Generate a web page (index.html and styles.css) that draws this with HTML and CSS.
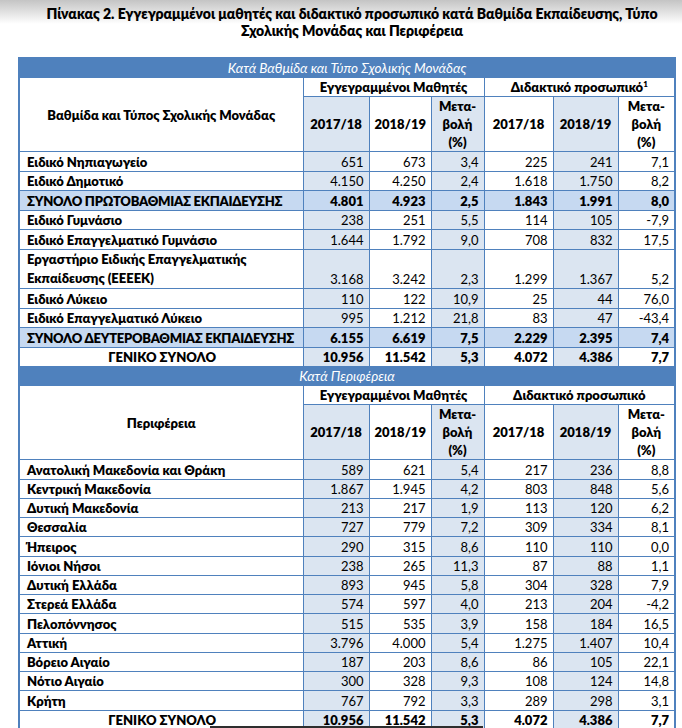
FILE: index.html
```html
<!DOCTYPE html>
<html lang="el">
<head>
<meta charset="utf-8">
<title>Πίνακας 2</title>
<link rel="stylesheet" href="styles.css">
</head>
<body>
<div class="page">
  <h1 class="title">Πίνακας 2. Εγγεγραμμένοι μαθητές και διδακτικό προσωπικό κατά Βαθμίδα Εκπαίδευσης, Τύπο<br>Σχολικής Μονάδας και Περιφέρεια</h1>
  <table class="stats">
    <colgroup>
      <col class="c-label"><col class="c-a"><col class="c-b"><col class="c-c"><col class="c-d"><col class="c-e"><col class="c-f">
    </colgroup>
    <tbody class="sec1">
      <tr class="band"><td colspan="7">Κατά Βαθμίδα και Τύπο Σχολικής Μονάδας</td></tr>
      <tr class="head1">
        <td class="lbl-head" rowspan="2">Βαθμίδα και Τύπος Σχολικής Μονάδας</td>
        <td colspan="3">Εγγεγραμμένοι Μαθητές</td>
        <td colspan="3">Διδακτικό προσωπικό<sup>1</sup></td>
      </tr>
      <tr class="head2">
        <td class="sh">2017/18</td><td>2018/19</td><td class="sh">Μετα-<br>βολή<br>(%)</td>
        <td>2017/18</td><td class="sh">2018/19</td><td>Μετα-<br>βολή<br>(%)</td>
      </tr>
      <tr><td class="lbl">Ειδικό Νηπιαγωγείο</td><td class="sh">651</td><td>673</td><td class="sh">3,4</td><td>225</td><td class="sh">241</td><td>7,1</td></tr>
      <tr><td class="lbl">Ειδικό Δημοτικό</td><td class="sh">4.150</td><td>4.250</td><td class="sh">2,4</td><td>1.618</td><td class="sh">1.750</td><td>8,2</td></tr>
      <tr class="total"><td class="lbl">ΣΥΝΟΛΟ ΠΡΩΤΟΒΑΘΜΙΑΣ ΕΚΠΑΙΔΕΥΣΗΣ</td><td>4.801</td><td>4.923</td><td>2,5</td><td>1.843</td><td>1.991</td><td>8,0</td></tr>
      <tr><td class="lbl">Ειδικό Γυμνάσιο</td><td class="sh">238</td><td>251</td><td class="sh">5,5</td><td>114</td><td class="sh">105</td><td>-7,9</td></tr>
      <tr><td class="lbl">Ειδικό Επαγγελματικό Γυμνάσιο</td><td class="sh">1.644</td><td>1.792</td><td class="sh">9,0</td><td>708</td><td class="sh">832</td><td>17,5</td></tr>
      <tr class="tall"><td class="lbl">Εργαστήριο Ειδικής Επαγγελματικής<br>Εκπαίδευσης (ΕΕΕΕΚ)</td><td class="sh">3.168</td><td>3.242</td><td class="sh">2,3</td><td>1.299</td><td class="sh">1.367</td><td>5,2</td></tr>
      <tr><td class="lbl">Ειδικό Λύκειο</td><td class="sh">110</td><td>122</td><td class="sh">10,9</td><td>25</td><td class="sh">44</td><td>76,0</td></tr>
      <tr><td class="lbl">Ειδικό Επαγγελματικό Λύκειο</td><td class="sh">995</td><td>1.212</td><td class="sh">21,8</td><td>83</td><td class="sh">47</td><td>-43,4</td></tr>
      <tr class="total"><td class="lbl">ΣΥΝΟΛΟ ΔΕΥΤΕΡΟΒΑΘΜΙΑΣ ΕΚΠΑΙΔΕΥΣΗΣ</td><td>6.155</td><td>6.619</td><td>7,5</td><td>2.229</td><td>2.395</td><td>7,4</td></tr>
      <tr class="grand"><td class="lbl">ΓΕΝΙΚΟ ΣΥΝΟΛΟ</td><td class="sh">10.956</td><td>11.542</td><td class="sh">5,3</td><td>4.072</td><td class="sh">4.386</td><td>7,7</td></tr>
    </tbody>
    <tbody class="sec2">
      <tr class="band"><td colspan="7">Κατά Περιφέρεια</td></tr>
      <tr class="head1">
        <td class="lbl-head" rowspan="2">Περιφέρεια</td>
        <td colspan="3">Εγγεγραμμένοι Μαθητές</td>
        <td colspan="3">Διδακτικό προσωπικό</td>
      </tr>
      <tr class="head2">
        <td class="sh">2017/18</td><td>2018/19</td><td class="sh">Μετα-<br>βολή<br>(%)</td>
        <td>2017/18</td><td class="sh">2018/19</td><td>Μετα-<br>βολή<br>(%)</td>
      </tr>
      <tr><td class="lbl">Ανατολική Μακεδονία και Θράκη</td><td class="sh">589</td><td>621</td><td class="sh">5,4</td><td>217</td><td class="sh">236</td><td>8,8</td></tr>
      <tr><td class="lbl">Κεντρική Μακεδονία</td><td class="sh">1.867</td><td>1.945</td><td class="sh">4,2</td><td>803</td><td class="sh">848</td><td>5,6</td></tr>
      <tr><td class="lbl">Δυτική Μακεδονία</td><td class="sh">213</td><td>217</td><td class="sh">1,9</td><td>113</td><td class="sh">120</td><td>6,2</td></tr>
      <tr><td class="lbl">Θεσσαλία</td><td class="sh">727</td><td>779</td><td class="sh">7,2</td><td>309</td><td class="sh">334</td><td>8,1</td></tr>
      <tr><td class="lbl">Ήπειρος</td><td class="sh">290</td><td>315</td><td class="sh">8,6</td><td>110</td><td class="sh">110</td><td>0,0</td></tr>
      <tr><td class="lbl">Ιόνιοι Νήσοι</td><td class="sh">238</td><td>265</td><td class="sh">11,3</td><td>87</td><td class="sh">88</td><td>1,1</td></tr>
      <tr><td class="lbl">Δυτική Ελλάδα</td><td class="sh">893</td><td>945</td><td class="sh">5,8</td><td>304</td><td class="sh">328</td><td>7,9</td></tr>
      <tr><td class="lbl">Στερεά Ελλάδα</td><td class="sh">574</td><td>597</td><td class="sh">4,0</td><td>213</td><td class="sh">204</td><td>-4,2</td></tr>
      <tr><td class="lbl">Πελοπόννησος</td><td class="sh">515</td><td>535</td><td class="sh">3,9</td><td>158</td><td class="sh">184</td><td>16,5</td></tr>
      <tr><td class="lbl">Αττική</td><td class="sh">3.796</td><td>4.000</td><td class="sh">5,4</td><td>1.275</td><td class="sh">1.407</td><td>10,4</td></tr>
      <tr><td class="lbl">Βόρειο Αιγαίο</td><td class="sh">187</td><td>203</td><td class="sh">8,6</td><td>86</td><td class="sh">105</td><td>22,1</td></tr>
      <tr><td class="lbl">Νότιο Αιγαίο</td><td class="sh">300</td><td>328</td><td class="sh">9,3</td><td>108</td><td class="sh">124</td><td>14,8</td></tr>
      <tr><td class="lbl">Κρήτη</td><td class="sh">767</td><td>792</td><td class="sh">3,3</td><td>289</td><td class="sh">298</td><td>3,1</td></tr>
      <tr class="grand"><td class="lbl">ΓΕΝΙΚΟ ΣΥΝΟΛΟ</td><td class="sh">10.956</td><td>11.542</td><td class="sh">5,3</td><td>4.072</td><td class="sh">4.386</td><td>7,7</td></tr>
    </tbody>
  </table>
  <div class="scrollbar"></div>
</div>
</body>
</html>
```
FILE: styles.css
```css
* { box-sizing: border-box; }
html, body { margin: 0; padding: 0; }
body {
  background: linear-gradient(to bottom, #c4c4c4 0px, #ffffff 24px) no-repeat #ffffff;
  font-family: Lato, "Open Sans", "Noto Sans", sans-serif;
  color: #000;
  height: 728px;
  overflow: hidden;
}
.page {
  position: relative;
  width: 682px;
  height: 728px;
  padding: 5px 0 0 18px;
}
.title {
  margin: 0 0 18px 0;
  padding-left: 12px;
  width: 656px;
  text-align: center;
  font-size: 14px;
  line-height: 17px;
  font-weight: 800;
}
.stats {
  border-collapse: collapse;
  table-layout: fixed;
  width: 656px;
  font-size: 13px;
  border: 2px solid #4f81bd;
}
.c-label { width: 284px; }
.c-a { width: 66px; }
.c-b { width: 62px; }
.c-c { width: 53px; }
.c-d { width: 69px; }
.c-e { width: 65px; }
.c-f { width: 57px; }
.stats td {
  border: 1px solid #4f81bd;
  padding: 0 5px;
  line-height: 18px;
  text-align: right;
  vertical-align: bottom;
  white-space: nowrap;
}
/* source rows are 19–20px tall */
.sec1 tr:nth-child(even):not(.head1) td { padding-top: 1px; }
.sec2 tr:nth-child(4n) td { padding-top: 1px; }
.stats tr.tall td.lbl { line-height: 19px; }
.stats td.sh { background: #dbe5f1; }
.stats td.lbl {
  text-align: left;
  font-weight: 800;
  padding-left: 7px;
}
.band td {
  background: #4f81bd;
  color: #fff;
  font-style: italic;
  font-size: 13.5px;
  text-align: center;
  vertical-align: middle;
  border-color: #4f81bd;
}
.head1 td, .head2 td {
  font-weight: 800;
  text-align: center;
  vertical-align: middle;
}
.lbl-head { background: #fff; }
sup {
  font-size: 8px;
  line-height: 0;
  vertical-align: 5px;
}
.total td { background: #c6d9f1; font-weight: 800; }
.stats .total td.sh { background: #c6d9f1; }
.stats .total td.lbl { letter-spacing: -0.25px; }
.grand td { font-weight: 800; }
.grand td.lbl { text-align: center; }
.scrollbar {
  position: absolute;
  left: 210px;
  top: 726px;
  width: 273px;
  height: 2px;
  background: #2e2e2e;
}
```
